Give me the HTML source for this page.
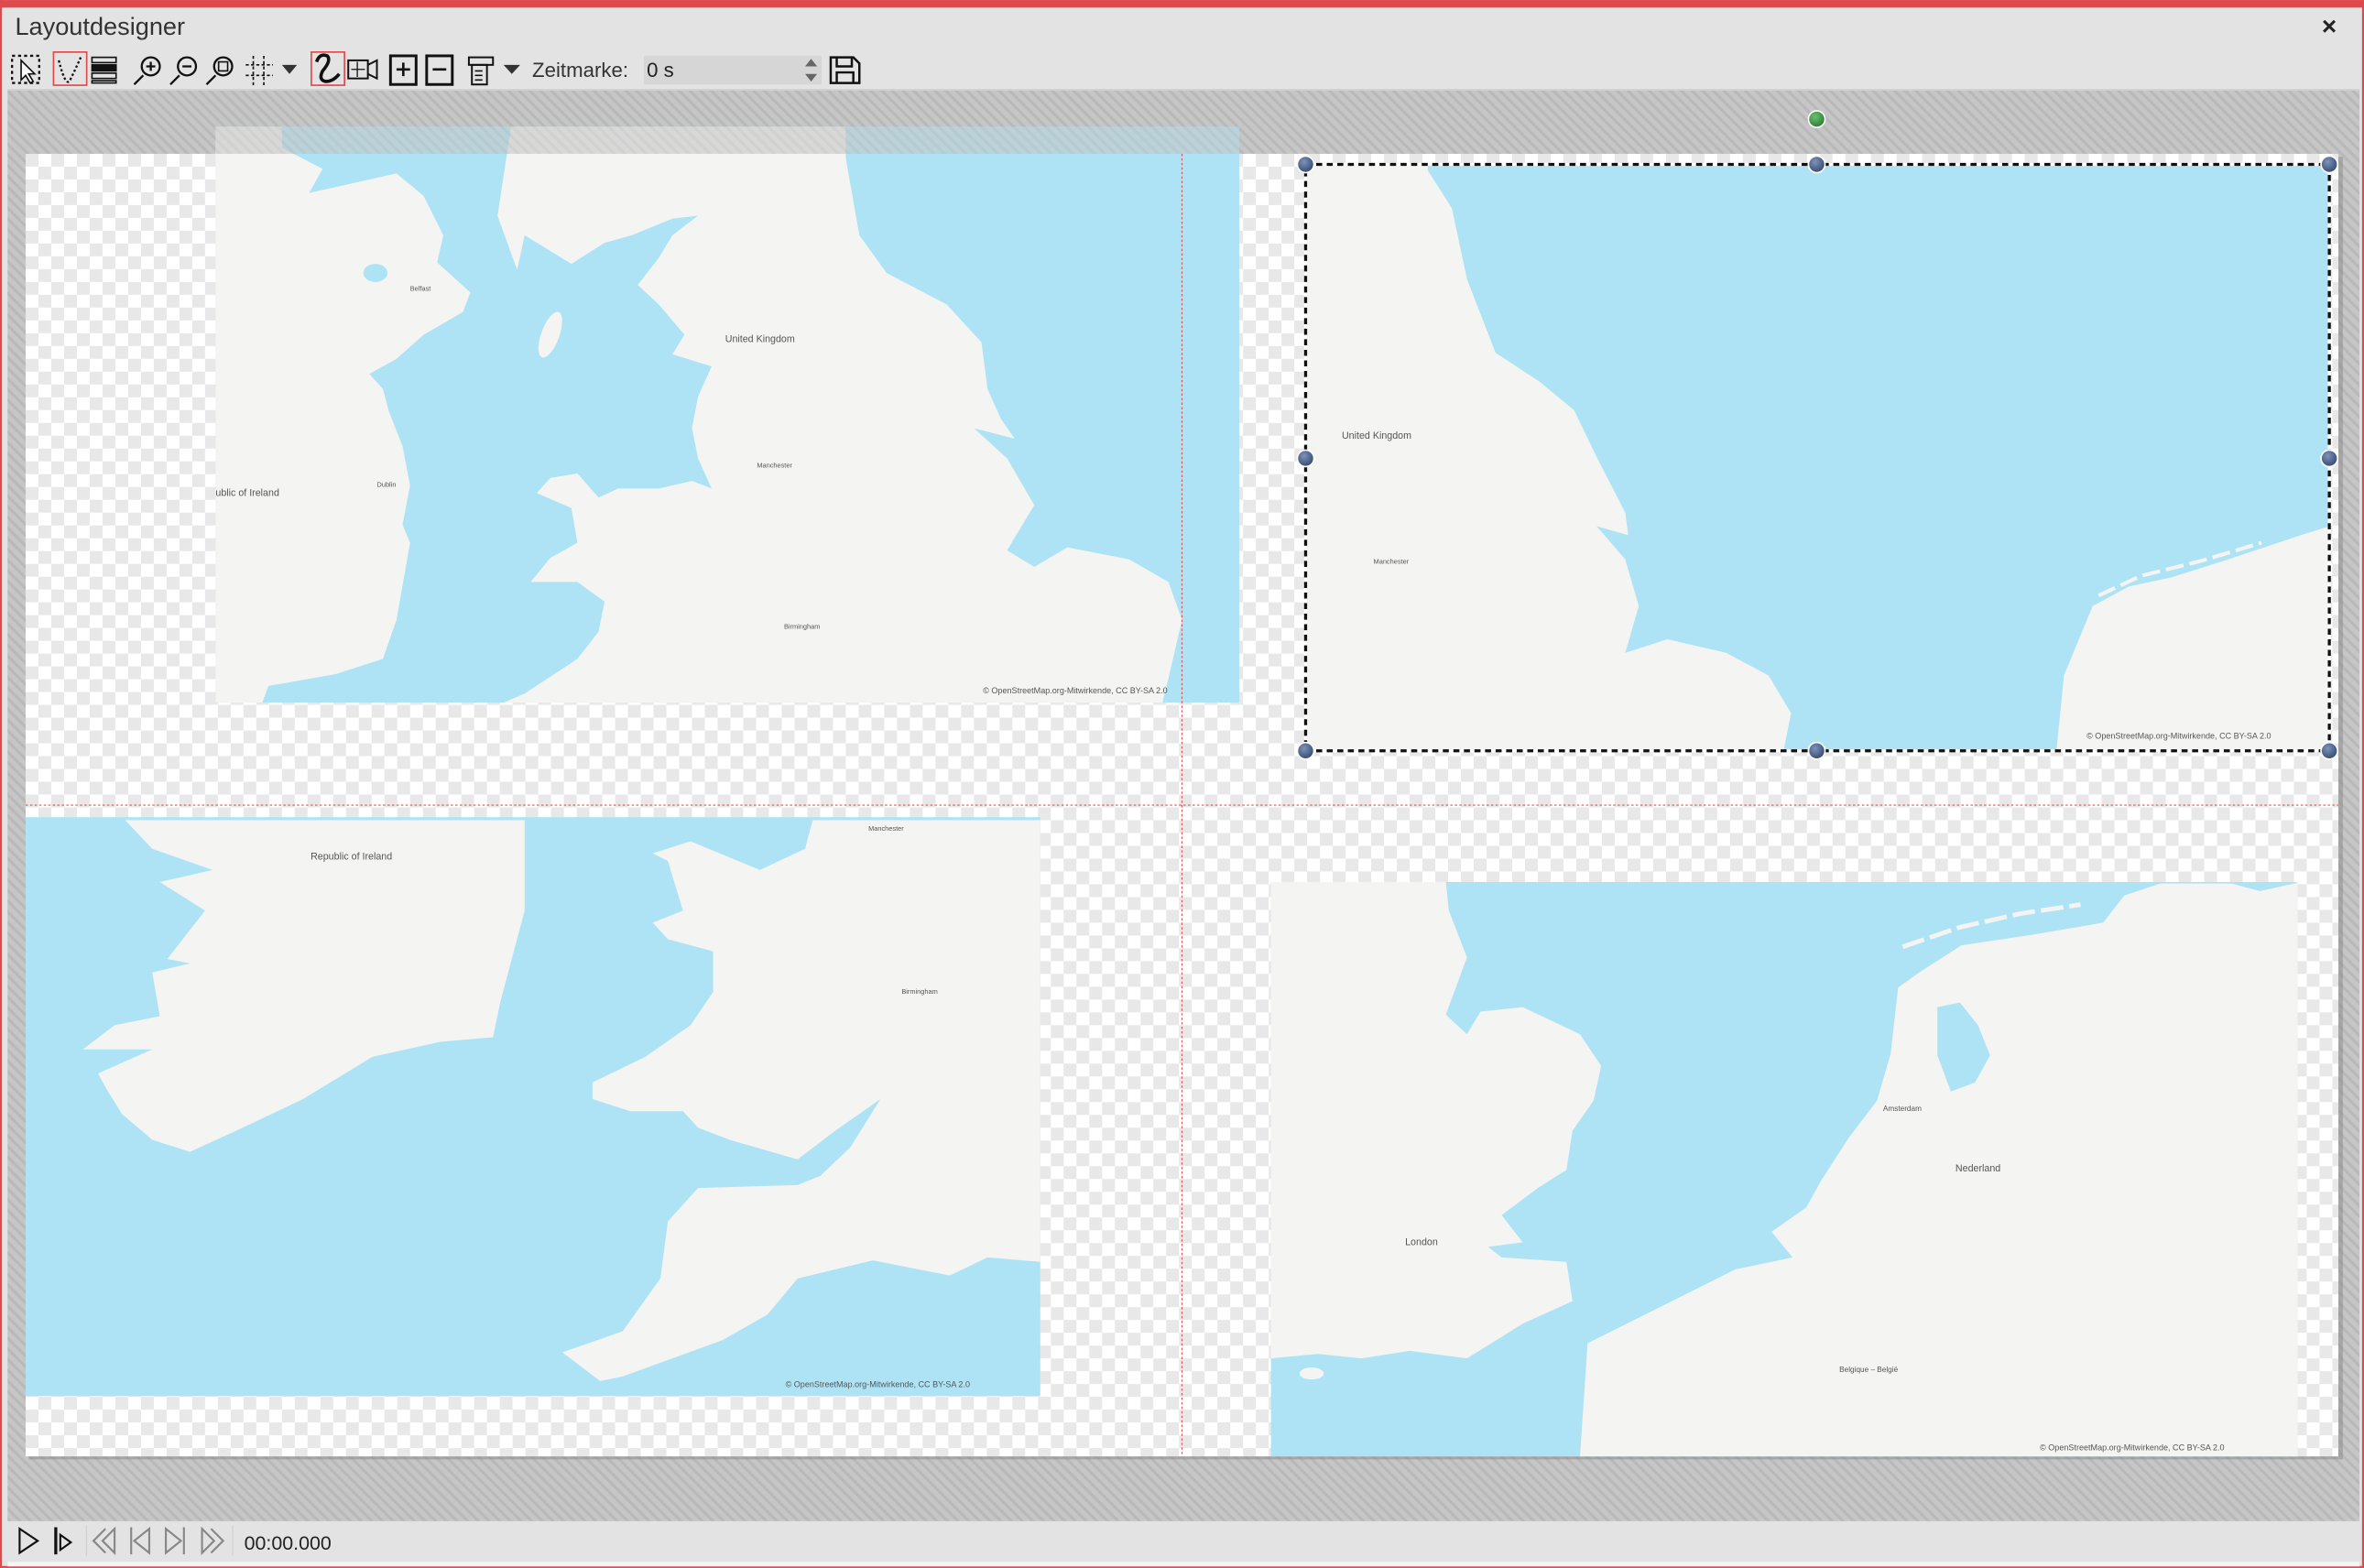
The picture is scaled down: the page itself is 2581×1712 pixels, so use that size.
<!DOCTYPE html>
<html><head><meta charset="utf-8"><style>
html,body{margin:0;padding:0;width:2581px;height:1712px;overflow:hidden;background:#e3e3e3}
svg{display:block}
text{font-family:"Liberation Sans",sans-serif}
</style></head><body>
<svg width="2581" height="1712" viewBox="0 0 1568 1040" xmlns="http://www.w3.org/2000/svg">
<defs>
<pattern id="hatch" width="5" height="5" patternUnits="userSpaceOnUse" patternTransform="rotate(-45)">
<rect width="5" height="5" fill="#c6c6c6"/><rect width="2" height="5" fill="#b9b9b9"/>
</pattern>
<pattern id="chk" width="17" height="17" patternUnits="userSpaceOnUse" x="17" y="102">
<rect width="17" height="17" fill="#fff"/><rect width="8.5" height="8.5" fill="#e8e8e8"/><rect x="8.5" y="8.5" width="8.5" height="8.5" fill="#e8e8e8"/>
</pattern>
<radialGradient id="bh" cx="0.4" cy="0.35" r="0.7"><stop offset="0" stop-color="#7d93b8"/><stop offset="1" stop-color="#33466e"/></radialGradient>
<radialGradient id="gh" cx="0.4" cy="0.35" r="0.7"><stop offset="0" stop-color="#6fbf6f"/><stop offset="1" stop-color="#237a2e"/></radialGradient>
</defs>
<!-- window -->
<rect x="0" y="0" width="1568" height="1040" fill="#e3e3e3"/>
<rect x="0" y="0" width="1568" height="5" fill="#e0484b"/>
<rect x="0" y="0" width="1.3" height="1040" fill="#e0484b"/>
<rect x="0" y="1038.7" width="1568" height="1.3" fill="#e0484b"/>
<rect x="1566.7" y="0" width="1.3" height="1040" fill="#e0484b"/>
<text x="10" y="23" font-size="16.5" fill="#333">Layoutdesigner</text>
<text x="1540" y="23" font-size="17" fill="#222" font-weight="bold">×</text>

<!-- toolbar -->
<g fill="none" stroke="#111" stroke-width="1.4">
 <rect x="8" y="37" width="18" height="18" stroke-dasharray="2,2"/>
 <path d="M14 40 L14 53 L17 50 L20 55 L22 54 L19 49 L23 49 Z" fill="#fff" stroke-width="1"/>
 <rect x="35.5" y="34.5" width="22" height="22" stroke="#e0484b" stroke-width="1"/>
 <path d="M39 40 Q44 60 47 52 Q50 46 54 37" stroke-dasharray="1.5,1.5"/>
 <rect x="61" y="38" width="16" height="3.5" stroke-width="1"/><rect x="61" y="43" width="16" height="4" fill="#111" stroke-width="1"/><rect x="61" y="48.5" width="16" height="3.5" stroke-width="1"/><rect x="61" y="53.5" width="16" height="1.5" stroke-width="1"/>
 <circle cx="100" cy="44" r="6"/><path d="M95 50 L89 56 M97 44 H103 M100 41 V47"/>
 <circle cx="124" cy="44" r="6"/><path d="M119 50 L113 56 M121 44 H127"/>
 <circle cx="148" cy="44" r="6"/><path d="M143 50 L137 56"/><rect x="145" y="41" width="6" height="6" stroke-width="1"/>
 <path d="M168 37 V58 M175 37 V58 M163 43 H181 M163 50 H181" stroke-dasharray="2,1.5" stroke-width="1"/>
 <rect x="206.5" y="34.5" width="22" height="22" stroke="#e0484b" stroke-width="1"/>
 <path d="M210 41 Q212 35 217 37 Q220 40 214 47 Q211 53 216 54 Q221 54 225 49" stroke-width="2.2"/>
 <rect x="231" y="40" width="13" height="12" stroke-width="1.2"/><path d="M244 43 L250 40 V52 L244 49" stroke-width="1.2"/><path d="M237 41 V51 M233 46 H242" stroke-width="0.8"/>
 <rect x="259" y="37" width="17" height="19" stroke-width="1.8"/><path d="M263 46 H272 M267.5 41.5 V50.5" stroke-width="1.6"/>
 <rect x="283" y="37" width="17" height="19" stroke-width="1.8"/><path d="M287 46 H296" stroke-width="1.6"/>
 <rect x="311" y="38" width="16" height="5" stroke-width="1.2"/><rect x="313" y="43" width="10" height="13" stroke-width="1.2"/>
 <path d="M315 47 H320 M315 50 H320 M315 53 H320" stroke-width="1"/>
</g>
<path d="M187 43 H197 L192 49 Z" fill="#333"/>
<path d="M334 43 H345 L339.5 49 Z" fill="#333"/>
<text x="353" y="51" font-size="13.5" fill="#333">Zeitmarke:</text>
<rect x="427" y="37" width="118" height="19" fill="#d6d6d6"/>
<text x="429" y="51" font-size="13.5" fill="#222">0 s</text>
<path d="M534 44 L538 39 L542 44 Z M534 49 L538 54 L542 49 Z" fill="#666"/>
<g fill="none" stroke="#111" stroke-width="1.5"><path d="M551 38 H566 L570 42 V55 H551 Z"/><path d="M555 38 V44 H565 V38 M555 55 V48 H566 V55"/></g>
<rect x="5" y="59" width="1560" height="1" fill="#d0d0d0"/>

<!-- canvas -->
<rect x="5" y="60" width="1560" height="949" fill="url(#hatch)"/>
<rect x="19" y="104" width="1535" height="864" fill="#888" opacity="0.5"/>
<rect x="17" y="102" width="1534" height="864" fill="url(#chk)"/>

<!-- map 1 -->
<g>
<rect x="143" y="84" width="679" height="382" fill="#aee3f5"/>
<path d="M143 84 L187 84 L187 98 L214 112 L205 128 L263 115 L281 130 L294 156 L290 174 L312 194 L307 207 L281 222 L263 238 L245 248 L254 258 L258 273 L267 296 L272 322 L267 348 L272 360 L263 411 L254 437 L223 447 L178 455 L174 466 L143 466 Z" fill="#f4f4f2"/>
<ellipse cx="249" cy="181" rx="8" ry="6" fill="#aee3f5"/>
<path d="M339 84 L561 84 L561 105 L570 156 L588 181 L628 202 L651 227 L655 258 L664 278 L673 291 L646 284 L668 304 L686 335 L668 365 L686 376 L708 363 L749 371 L775 386 L784 411 L775 450 L771 466 L334 466 L348 460 L383 437 L397 419 L401 399 L383 386 L352 386 L365 370 L383 360 L379 337 L356 327 L365 317 L383 314 L397 330 L410 324 L437 324 L459 319 L472 324 L463 304 L459 284 L463 263 L472 243 L446 235 L454 222 L437 202 L423 189 L437 171 L446 156 L463 143 L446 145 L419 156 L401 161 L379 175 L348 156 L343 179 L330 143 Z" fill="#f4f4f2"/>
<ellipse cx="365" cy="222" rx="6" ry="16" transform="rotate(20 365 222)" fill="#f4f4f2"/>
<g font-size="6.5" fill="#555"><text x="481" y="227">United Kingdom</text><text x="143" y="329">ublic of Ireland</text><text x="502" y="310" font-size="4.5">Manchester</text><text x="272" y="193" font-size="4.5">Belfast</text><text x="250" y="323" font-size="4.5">Dublin</text><text x="520" y="417" font-size="4.5">Birmingham</text><text x="652" y="460" font-size="5.5">© OpenStreetMap.org-Mitwirkende, CC BY-SA 2.0</text></g>
<rect x="143" y="84" width="679" height="18" fill="url(#hatch)" opacity="0.6"/>
</g>

<!-- map 3 -->
<g>
<rect x="17" y="542" width="673" height="384" fill="#aee3f5"/>
<path d="M83 544 L348 544 L348 604 L332 664 L327 688 L292 691 L247 701 L201 729 L161 748 L126 764 L101 756 L81 739 L71 723 L65 712 L101 696 L55 696 L76 680 L106 674 L101 645 L126 639 L111 636 L136 604 L106 585 L141 577 L101 563 Z" fill="#f4f4f2"/>
<path d="M539 544 L690 544 L690 837 L655 834 L630 846 L579 836 L529 848 L509 872 L479 889 L413 913 L398 916 L373 897 L413 883 L438 848 L443 810 L463 788 L529 786 L544 780 L564 761 L584 729 L554 750 L529 769 L484 756 L463 748 L453 737 L418 737 L393 729 L393 718 L428 701 L458 680 L473 658 L473 631 L443 623 L433 612 L453 604 L443 571 L433 566 L458 558 L504 577 L534 563 Z" fill="#f4f4f2"/>
<g font-size="6.5" fill="#555"><text x="206" y="570">Republic of Ireland</text><text x="576" y="551" font-size="4.5">Manchester</text><text x="598" y="659" font-size="4.5">Birmingham</text><text x="521" y="920" font-size="5.5">© OpenStreetMap.org-Mitwirkende, CC BY-SA 2.0</text></g>
</g>

<!-- map 4 -->
<g>
<rect x="843" y="585" width="681" height="381" fill="#aee3f5"/>
<path d="M843 585 L959 585 L961 604 L973 635 L959 673 L973 686 L982 671 L1010 668 L1048 686 L1062 707 L1057 730 L1043 750 L1039 776 L1020 788 L996 806 L1010 824 L987 827 L996 834 L1039 837 L1043 863 L1010 878 L973 901 L935 896 L903 901 L874 898 L843 901 Z" fill="#f4f4f2"/>
<ellipse cx="870" cy="911" rx="8" ry="4" fill="#f4f4f2"/>
<path d="M1048 966 L1053 891 L1095 870 L1151 842 L1189 834 L1175 817 L1198 801 L1208 783 L1226 755 L1245 730 L1254 699 L1259 655 L1273 645 L1301 627 L1348 620 L1395 612 L1409 594 L1433 586 L1480 586 L1499 591 L1522 586 L1524 585 L1524 966 Z" fill="#f4f4f2"/>
<path d="M1285 668 L1300 665 L1312 680 L1320 700 L1310 718 L1294 724 L1285 700 Z" fill="#aee3f5"/>
<path d="M1262 628 L1300 615 L1340 606 L1380 600" stroke="#f4f4f2" stroke-width="3" fill="none" stroke-dasharray="15,4"/>
<g font-size="6.5" fill="#555"><text x="1297" y="777">Nederland</text><text x="932" y="826">London</text><text x="1249" y="737" font-size="5">Amsterdam</text><text x="1220" y="910" font-size="5">Belgique – België</text><text x="1353" y="962" font-size="5.5">© OpenStreetMap.org-Mitwirkende, CC BY-SA 2.0</text></g>
</g>

<!-- map 2 (selected) -->
<g>
<rect x="866" y="109" width="679" height="389" fill="#aee3f5"/>
<path d="M866 109 L947 109 L947 113 L963 138 L973 185 L992 234 L1021 253 L1044 272 L1059 303 L1078 340 L1080 355 L1059 349 L1078 371 L1087 402 L1078 433 L1106 424 L1145 433 L1173 448 L1188 473 L1183 498 L866 498 Z" fill="#f4f4f2"/>
<path d="M1364 498 L1369 448 L1388 402 L1412 389 L1440 383 L1478 371 L1526 355 L1545 349 L1545 498 Z" fill="#f4f4f2"/>
<path d="M1392 395 L1420 382 L1460 372 L1500 360" stroke="#f4f4f2" stroke-width="2.5" fill="none" stroke-dasharray="12,4"/>
<g font-size="6.5" fill="#555"><text x="890" y="291">United Kingdom</text><text x="911" y="374" font-size="4.5">Manchester</text><text x="1384" y="490" font-size="5.5">© OpenStreetMap.org-Mitwirkende, CC BY-SA 2.0</text></g>
</g>

<!-- guides -->
<line x1="784" y1="102" x2="784" y2="966" stroke="#e05050" stroke-width="0.7" stroke-dasharray="1.5,1.5"/>
<line x1="17" y1="534" x2="1551" y2="534" stroke="#e05050" stroke-width="0.7" stroke-dasharray="1.5,1.5"/>

<!-- selection -->
<rect x="866" y="109" width="679" height="389" fill="none" stroke="#fff" stroke-width="2"/>
<rect x="866" y="109" width="679" height="389" fill="none" stroke="#111" stroke-width="2" stroke-dasharray="4,3"/>
<g stroke="#fff" stroke-width="1" fill="url(#bh)">
<circle cx="866" cy="109" r="5.5"/><circle cx="1205" cy="109" r="5.5"/><circle cx="1545" cy="109" r="5.5"/>
<circle cx="866" cy="304" r="5.5"/><circle cx="1545" cy="304" r="5.5"/>
<circle cx="866" cy="498" r="5.5"/><circle cx="1205" cy="498" r="5.5"/><circle cx="1545" cy="498" r="5.5"/>
<circle cx="1205" cy="79" r="5.5" fill="url(#gh)"/>
</g>

<!-- bottom bar -->
<rect x="5" y="1009" width="1560" height="27" fill="#e3e3e3"/>
<rect x="5" y="1036" width="1560" height="3" fill="#f5f5f5"/>
<g fill="none" stroke-width="1.3">
<path d="M13 1014 L25 1022 L13 1030 Z" stroke="#111"/>
<path d="M37 1013 V1031" stroke="#111" stroke-width="2"/><path d="M40 1018 L47 1023 L40 1028 Z" stroke="#111"/>
<g stroke="#888"><path d="M76 1014 L68 1022 L76 1030 Z M70 1014 L62 1022 L70 1030"/><path d="M87 1013 V1031 M99 1014 L89 1022 L99 1030 Z"/><path d="M110 1014 L120 1022 L110 1030 Z M122 1013 V1031"/><path d="M134 1014 L142 1022 L134 1030 Z M140 1014 L148 1022 L140 1030"/></g>
</g>
<rect x="57" y="1012" width="0.6" height="20" fill="#ccc"/><rect x="154" y="1012" width="0.6" height="20" fill="#ccc"/>
<text x="162" y="1028" font-size="13" fill="#222">00:00.000</text>
</svg>
</body></html>
